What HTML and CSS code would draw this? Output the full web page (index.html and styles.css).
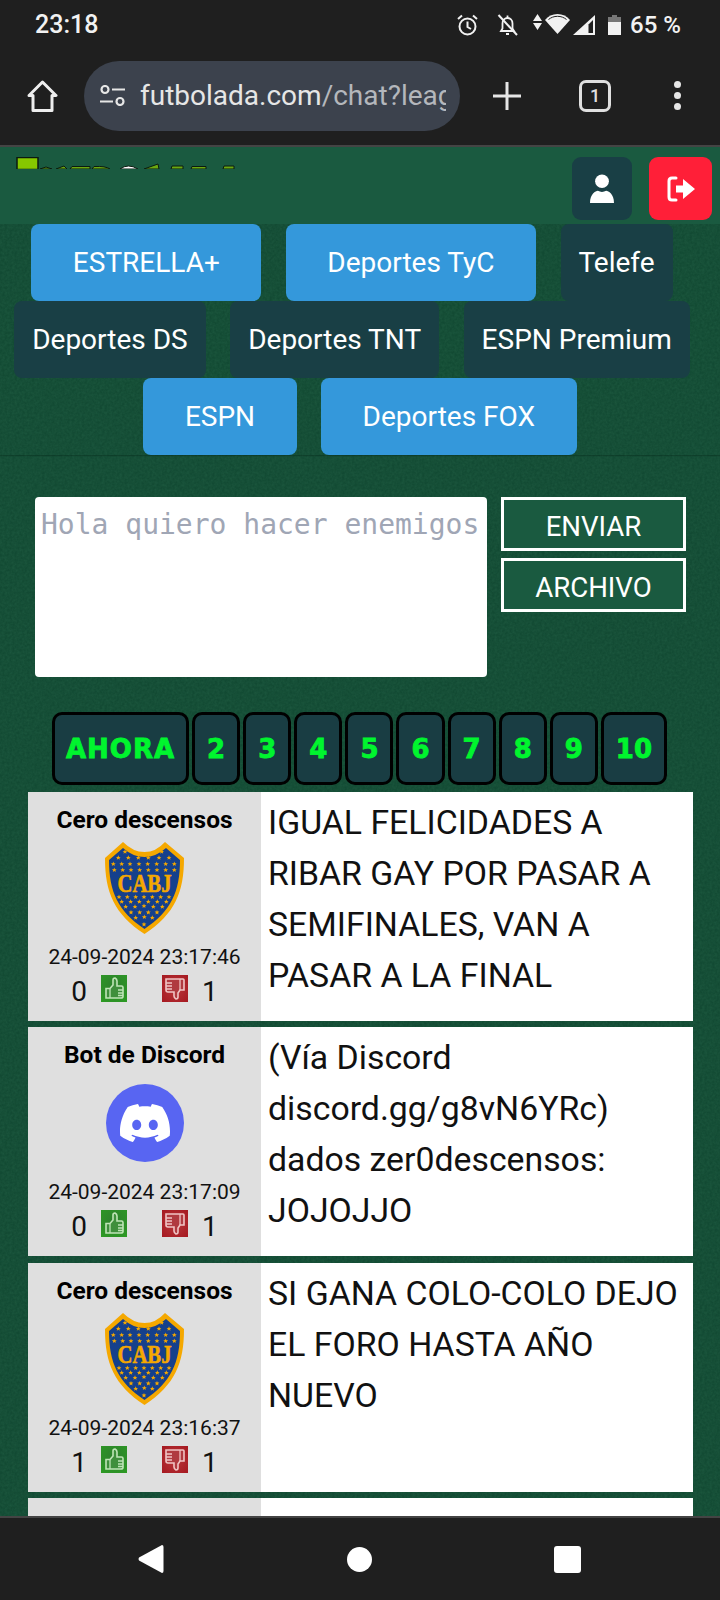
FILE: index.html
```html
<!DOCTYPE html>
<html lang="es">
<head>
  <meta charset="UTF-8" />
  <meta name="viewport" content="width=device-width, initial-scale=1.0"/>
  <title>Futbolada chat</title>
  <link rel="stylesheet" href="styles.css">
</head>
<body>

  <svg class="defs" width="0" height="0">
    <defs>
      <polygon id="star" points="0,-2.4 .7,-.7 2.4,-.7 1.1,.4 1.5,2.1 0,1.1 -1.5,2.1 -1.1,.4 -2.4,-.7 -.7,-.7" fill="#f5a800"/>

      <symbol id="boca" viewBox="0 0 79 92">
        <path d="M0 16 L18 0 Q28 10 39.5 10 Q51 10 60 0 L79 16 C79 50 70 72 39.5 92 C9 72 0 50 0 16Z" fill="#f5a800"/>
        <path d="M4 18 L18 6 Q28 15 39.5 15 Q51 15 61 6 L75 18 C75 50 66 69 39.5 87 C13 69 4 50 4 18Z" fill="#15408c"/>
        <use href="#star" x="20" y="9.7"/><use href="#star" x="56.7" y="9.7"/>
        <use href="#star" x="13.3" y="15.7"/><use href="#star" x="23.3" y="15.7"/><use href="#star" x="33.3" y="15.7"/><use href="#star" x="43.3" y="15.7"/><use href="#star" x="54" y="15.7"/><use href="#star" x="64" y="15.7"/>
        <use href="#star" x="8.3" y="22"/><use href="#star" x="16.7" y="22"/><use href="#star" x="25" y="22"/><use href="#star" x="34" y="22"/><use href="#star" x="42.7" y="22"/><use href="#star" x="51.7" y="22"/><use href="#star" x="60.7" y="22"/><use href="#star" x="69.3" y="22"/>
        <use href="#star" x="9.3" y="28"/><use href="#star" x="17.7" y="28"/><use href="#star" x="26" y="28"/><use href="#star" x="34.7" y="28"/><use href="#star" x="43.3" y="28"/><use href="#star" x="52" y="28"/><use href="#star" x="60.7" y="28"/><use href="#star" x="69.3" y="28"/>
        <text x="39.5" y="50" text-anchor="middle" textLength="54" lengthAdjust="spacingAndGlyphs" font-family="Liberation Serif" font-weight="700" font-size="26" stroke="#f5a800" stroke-width=".6" fill="#f5a800">CABJ</text>
        <use href="#star" x="14" y="55"/><use href="#star" x="22.3" y="55"/><use href="#star" x="30.7" y="55"/><use href="#star" x="39" y="55"/><use href="#star" x="47.3" y="55"/><use href="#star" x="55.7" y="55"/><use href="#star" x="64" y="55"/>
        <use href="#star" x="16.7" y="59.7"/><use href="#star" x="25.7" y="59.7"/><use href="#star" x="34.3" y="59.7"/><use href="#star" x="43.3" y="59.7"/><use href="#star" x="52.3" y="59.7"/><use href="#star" x="61.3" y="59.7"/>
        <use href="#star" x="20.7" y="64.7"/><use href="#star" x="30" y="64.7"/><use href="#star" x="39" y="64"/><use href="#star" x="48.3" y="64.7"/><use href="#star" x="57.3" y="64.7"/>
        <use href="#star" x="26" y="70.3"/><use href="#star" x="34.7" y="70.3"/><use href="#star" x="43.3" y="70.3"/><use href="#star" x="52" y="70.3"/>
        <use href="#star" x="30.7" y="75.7"/><use href="#star" x="39.3" y="75"/><use href="#star" x="47.3" y="75.7"/>
        <use href="#star" x="39" y="82.3"/>
      </symbol>

      <radialGradient id="thumbGreen" cx=".5" cy=".4" r=".8">
        <stop offset="0" stop-color="#2f7f2f"/>
        <stop offset="1" stop-color="#2c9c22"/>
      </radialGradient>
      <radialGradient id="thumbRed" cx=".5" cy=".5" r=".8">
        <stop offset="0" stop-color="#b8383c"/>
        <stop offset="1" stop-color="#a3141c"/>
      </radialGradient>

      <symbol id="thumbUp" viewBox="0 0 26 27">
        <rect width="26" height="27" fill="url(#thumbGreen)"/>
        <path d="M5 13.5 H9 L12 10 V5 Q12 3 14 3 Q16 4 16 6 V11 H20.5 Q22 11 22 12.5 V21.5 Q22 23 20 23 H5Z" fill="#3f8f3c" stroke="#bfe4b6" stroke-width="1.6"/>
        <path d="M17 15H22M17 18H22M17 20.5H22M9 14V23" stroke="#bfe4b6" stroke-width="1.3" fill="none"/>
      </symbol>
      <symbol id="thumbDown" viewBox="0 0 26 27">
        <rect width="26" height="27" fill="url(#thumbRed)"/>
        <path d="M4 4 H21 Q22 4 22 5 V15 H18 L16 18 V22 Q16 24 14 24 Q12 23 12 21 V17 H6 Q4 17 4 15Z" fill="#b03a40" stroke="#f0c4c4" stroke-width="1.6"/>
        <path d="M4 8H10M4 11H10M4 14H10M18 4V15" stroke="#f0c4c4" stroke-width="1.3" fill="none"/>
      </symbol>
    </defs>
  </svg>

  <div class="screen">

    <div class="status-bar">
      <span class="status-time">23:18</span>
      <div class="status-icons">
        <svg class="ico-alarm" width="21" height="22" viewBox="0 0 21 22" fill="none" stroke="#f2f2f2" stroke-width="2">
          <circle cx="10.5" cy="12.5" r="8"/>
          <path d="M10.5 7.5V13L14 15M1 5L5 1.5M20 5L16 1.5"/>
        </svg>
        <svg class="ico-bell" width="21" height="22" viewBox="0 0 21 22" fill="none" stroke="#f2f2f2" stroke-width="1.8">
          <path d="M4 17H17L15.5 14.5V9.5C15.5 6 13 4 10.5 4C8 4 5.5 6 5.5 9.5V14.5Z"/>
          <path d="M9 20H12M10.5 1.5V4" />
          <path d="M1.5 1L20 21" stroke-width="2"/>
        </svg>
        <svg class="ico-arrows" width="9" height="16" viewBox="0 0 9 16" fill="#f2f2f2">
          <path d="M4.5 0L9 7H0ZM0 9H9L4.5 16Z"/>
        </svg>
        <svg class="ico-wifi" width="25" height="21" viewBox="0 0 25 21" fill="#f2f2f2">
          <path d="M12.5 21L0 7C3 3 7.500 1 12.500 1S22 3 25 7Z"/>
          <path d="M3.500 6.500C6 4.500 9 3.300 12.500 3.300S19 4.500 21.500 6.500" stroke="#1f1f1f" stroke-width="1" fill="none"/>
        </svg>
        <svg class="ico-signal" width="22" height="20" viewBox="0 0 22 20">
          <path d="M22 0V20H0Z" fill="#f2f2f2"/>
          <path d="M20 5V18H15.500V9.500Z" fill="#1f1f1f"/>
        </svg>
        <svg class="ico-battery" width="13" height="20" viewBox="0 0 13 20">
          <path d="M4 0H9V2H13V7H0V2H4Z" fill="#777"/>
          <rect y="7" width="13" height="13" fill="#f2f2f2"/>
        </svg>
        <span class="status-battery">65 %</span>
      </div>
    </div>

    <div class="toolbar">
      <svg class="ico-home" width="31" height="32" viewBox="0 0 31 32" fill="none" stroke="#eee" stroke-width="3" stroke-linejoin="round">
        <path d="M2 15.500L15.500 2L29 15.500H25V30.500H6V15.500Z"/>
      </svg>
      <div class="url-pill">
        <svg class="ico-tune" width="25" height="21" viewBox="0 0 25 21" fill="none" stroke="#e6e6e6" stroke-width="2.200">
          <circle cx="5" cy="4.500" r="3.500"/>
          <path d="M12 4.500H25M0 16.500H13"/>
          <circle cx="20" cy="16.500" r="3.500"/>
        </svg>
        <div class="url-text"><span class="url-host">futbolada.com</span>/chat?leag</div>
      </div>
      <svg class="ico-plus" width="28" height="28" viewBox="0 0 28 28" stroke="#e6e6e6" stroke-width="3">
        <path d="M14 0V28M0 14H28"/>
      </svg>
      <div class="tab-count">1</div>
      <div class="menu-dots"><i></i><i></i><i></i></div>
    </div>

    <div class="page">
      <header class="site-header">
        <svg class="site-logo" width="222" height="12" viewBox="0 0 222 12">
          <rect x="1" y="0.500" width="21" height="12" fill="#86c800" stroke="#0b1a10" stroke-width="1.500"/>
          <path d="M24 12L30 10L36 12ZM40 12L48 9L51 12ZM54 12L56 9.500H74V12ZM76 12L78 9.500Q90 9 94 12Z" fill="#6aa810" stroke="#0b1a10"/>
          <path d="M104 12Q112 6 122 12Z" fill="#fff" stroke="#0b1a10"/>
          <path d="M128 12L142 7L143 12ZM155 12L156 9H167V12ZM175 12L176 9.500H190V12ZM207 12L208 9H218V12Z" fill="#6aa810" stroke="#0b1a10"/>
        </svg>
        <div class="header-btns">
          <button class="head-btn head-btn-user" type="button">
            <svg width="24" height="29" viewBox="0 0 26 32" preserveAspectRatio="none" fill="#fff">
              <circle cx="13" cy="8" r="7.500"/>
              <path d="M0 32C0 22 6 18.500 8.500 18.500Q13 21 17.500 18.500C20 18.500 26 22 26 32Z"/>
            </svg>
          </button>
          <button class="head-btn head-btn-exit" type="button">
            <svg width="28" height="26" viewBox="0 0 28 26">
              <path d="M9 2H5Q2 2 2 5V21Q2 24 5 24H9" fill="none" stroke="#fff" stroke-width="3" stroke-linecap="round"/>
              <path d="M9 9.500H16V3L28 13L16 23V16.500H9Z" fill="#fff"/>
            </svg>
          </button>
        </div>
      </header>

      <nav class="channels">
        <div class="channel-row channel-row-shift">
          <a class="channel channel-on">ESTRELLA+</a>
          <a class="channel channel-on">Deportes TyC</a>
          <a class="channel">Telefe</a>
        </div>
        <div class="channel-row channel-row-shift">
          <a class="channel">Deportes DS</a>
          <a class="channel">Deportes TNT</a>
          <a class="channel">ESPN Premium</a>
        </div>
        <div class="channel-row">
          <a class="channel channel-on">ESPN</a>
          <a class="channel channel-on">Deportes FOX</a>
        </div>
      </nav>

      <form class="compose">
        <textarea class="compose-input" placeholder="Hola quiero hacer enemigos"></textarea>
        <div class="compose-btns">
          <button class="compose-btn" type="button">ENVIAR</button>
          <button class="compose-btn" type="button">ARCHIVO</button>
        </div>
      </form>

      <div class="pager">
        <a class="pager-item pager-now">AHORA</a>
        <a class="pager-item">2</a>
        <a class="pager-item">3</a>
        <a class="pager-item">4</a>
        <a class="pager-item">5</a>
        <a class="pager-item">6</a>
        <a class="pager-item">7</a>
        <a class="pager-item">8</a>
        <a class="pager-item">9</a>
        <a class="pager-item">10</a>
      </div>

      <div class="messages">
        <article class="msg">
          <div class="msg-side">
            <div class="msg-user">Cero descensos</div>
            <div class="msg-avatar"><svg width="79" height="92"><use href="#boca"/></svg></div>
            <div class="msg-date">24-09-2024 23:17:46</div>
            <div class="msg-votes">
              <span>0</span>
              <svg class="thumb" width="26" height="27"><use href="#thumbUp"/></svg>
              <svg class="thumb thumb-down" width="26" height="27"><use href="#thumbDown"/></svg>
              <span>1</span>
            </div>
          </div>
          <div class="msg-text">IGUAL FELICIDADES A RIBAR GAY POR PASAR A SEMIFINALES, VAN A PASAR A LA FINAL</div>
        </article>

        <article class="msg">
          <div class="msg-side">
            <div class="msg-user">Bot de Discord</div>
            <div class="msg-avatar">
              <div class="discord-badge">
                <svg width="50" height="50" viewBox="0 0 24 24" fill="#fff">
                  <path d="M20.317 4.3698a19.7913 19.7913 0 00-4.8851-1.5152.0741.0741 0 00-.0785.0371c-.211.3753-.4447.8648-.6083 1.2495-1.8447-.2762-3.68-.2762-5.4868 0-.1636-.3933-.4058-.8742-.6177-1.2495a.077.077 0 00-.0785-.037 19.7363 19.7363 0 00-4.8852 1.515.0699.0699 0 00-.0321.0277C.5334 9.0458-.319 13.5799.0992 18.0578a.0824.0824 0 00.0312.0561c2.0528 1.5076 4.0413 2.4228 5.9929 3.0294a.0777.0777 0 00.0842-.0276c.4616-.6304.8731-1.2952 1.226-1.9942a.076.076 0 00-.0416-.1057c-.6528-.2476-1.2743-.5495-1.8722-.8923a.077.077 0 01-.0076-.1277c.1258-.0943.2517-.1923.3718-.2914a.0743.0743 0 01.0776-.0105c3.9278 1.7933 8.18 1.7933 12.0614 0a.0739.0739 0 01.0785.0095c.1202.099.246.1981.3728.2924a.077.077 0 01-.0066.1276 12.2986 12.2986 0 01-1.873.8914.0766.0766 0 00-.0407.1067c.3604.698.7719 1.3628 1.225 1.9932a.076.076 0 00.0842.0286c1.961-.6067 3.9495-1.5219 6.0023-3.0294a.077.077 0 00.0313-.0552c.5004-5.177-.8382-9.6739-3.5485-13.6604a.061.061 0 00-.0312-.0286zM8.02 15.3312c-1.1825 0-2.1569-1.0857-2.1569-2.419 0-1.3332.9555-2.4189 2.157-2.4189 1.2108 0 2.1757 1.0952 2.1568 2.419 0 1.3332-.9555 2.4189-2.1569 2.4189zm7.9748 0c-1.1825 0-2.1569-1.0857-2.1569-2.419 0-1.3332.9554-2.4189 2.1569-2.4189 1.2108 0 2.1757 1.0952 2.1568 2.419 0 1.3332-.946 2.4189-2.1568 2.4189Z"/>
                </svg>
              </div>
            </div>
            <div class="msg-date">24-09-2024 23:17:09</div>
            <div class="msg-votes">
              <span>0</span>
              <svg class="thumb" width="26" height="27"><use href="#thumbUp"/></svg>
              <svg class="thumb thumb-down" width="26" height="27"><use href="#thumbDown"/></svg>
              <span>1</span>
            </div>
          </div>
          <div class="msg-text">(Vía Discord discord.gg/g8vN6YRc) dados zer0descensos: JOJOJJO</div>
        </article>

        <article class="msg">
          <div class="msg-side">
            <div class="msg-user">Cero descensos</div>
            <div class="msg-avatar"><svg width="79" height="92"><use href="#boca"/></svg></div>
            <div class="msg-date">24-09-2024 23:16:37</div>
            <div class="msg-votes">
              <span>1</span>
              <svg class="thumb" width="26" height="27"><use href="#thumbUp"/></svg>
              <svg class="thumb thumb-down" width="26" height="27"><use href="#thumbDown"/></svg>
              <span>1</span>
            </div>
          </div>
          <div class="msg-text">SI GANA COLO-COLO DEJO EL FORO HASTA AÑO NUEVO</div>
        </article>

        <article class="msg">
          <div class="msg-side"></div>
          <div class="msg-text"></div>
        </article>
      </div>
    </div>

    <div class="nav-bar">
      <svg width="26" height="28" viewBox="0 0 26 28" fill="#fff"><path d="M24 0Q25.500 0 25.500 2V26Q25.500 28 24 28L1 15.500Q0 14 1 12.500Z"/></svg>
      <div class="nav-home"></div>
      <div class="nav-recent"></div>
    </div>

  </div>
</body>
</html>
```

FILE: styles.css
```css
* {
  box-sizing: border-box;
}

body {
  margin: 0;
  font-family: Roboto, "Liberation Sans", sans-serif;
  background: #1f1f1f;
}

.defs {
  position: absolute;
}

.screen {
  width: 720px;
  height: 1600px;
  display: flex;
  flex-direction: column;
  overflow: hidden;
}

/* status bar */
.status-bar {
  height: 48px;
  flex: none;
  background: #1f1f1f;
  color: #f2f2f2;
  display: flex;
  align-items: center;
  justify-content: space-between;
  padding: 1px 39px 0 35px;
  font-weight: 500;
  font-size: 24px;
}

.status-time {
  font-size: 25px;
}

.status-icons {
  display: flex;
  align-items: center;
}

.ico-bell {
  margin-left: 19px;
}

.ico-arrows {
  margin: 0 3px 6px 15px;
}

.ico-wifi {
  margin-bottom: 2px;
}

.ico-signal {
  margin-left: 3px;
}

.ico-battery {
  margin-left: 13px;
}

.status-battery {
  margin-left: 9px;
}

/* browser toolbar */
.toolbar {
  height: 97px;
  flex: none;
  background: #1f1f1f;
  display: flex;
  align-items: center;
  padding: 0 0 2px 27px;
}

.url-pill {
  width: 376px;
  height: 70px;
  margin-left: 26px;
  border-radius: 35px;
  background: #3c424d;
  display: flex;
  align-items: center;
  padding: 0 14px 0 16px;
  overflow: hidden;
}

.url-text {
  margin-left: 15px;
  flex: 1;
  overflow: hidden;
  white-space: nowrap;
  font-size: 28px;
  color: #b4b7bc;
}

.url-host {
  color: #e6e6e6;
}

.ico-plus {
  margin-left: 33px;
}

.tab-count {
  width: 32px;
  height: 32px;
  margin-left: 58px;
  border: 3px solid #e0e0e0;
  border-radius: 7px;
  color: #e0e0e0;
  font-size: 18px;
  font-weight: 500;
  display: flex;
  align-items: center;
  justify-content: center;
}

.menu-dots {
  margin-left: 63px;
  display: flex;
  flex-direction: column;
  gap: 4px;
}

.menu-dots i {
  width: 7px;
  height: 7px;
  border-radius: 50%;
  background: #e6e6e6;
}

/* page */
.page {
  flex: 1;
  min-height: 0;
  overflow: hidden;
  border-top: 2px solid #444;
  background-color: #124a33;
  background-image: url("data:image/svg+xml,%3Csvg xmlns='http://www.w3.org/2000/svg' width='300' height='300'%3E%3Cfilter id='n'%3E%3CfeTurbulence type='fractalNoise' baseFrequency='.4' numOctaves='2' stitchTiles='stitch'/%3E%3CfeColorMatrix values='0 0 0 0 .05 0 0 0 0 .24 0 0 0 0 .13 0 0 0 .3 -.07'/%3E%3C/filter%3E%3Crect width='300' height='300' filter='url(%23n)'/%3E%3C/svg%3E");
}

.site-header {
  height: 77px;
  background: #1a5a40;
  display: flex;
  justify-content: space-between;
  padding: 10px 8px 0 16px;
}

.site-logo {
  display: block;
}

.header-btns {
  display: flex;
  gap: 17px;
  align-items: flex-start;
}

.head-btn {
  height: 63px;
  border: none;
  border-radius: 9px;
  padding: 0;
  display: flex;
  align-items: center;
  justify-content: center;
}

.head-btn-user {
  width: 60px;
  background: #193f45;
}

.head-btn-exit {
  width: 63px;
  background: #ff1f38;
}

.channels {
  height: 231px;
  box-shadow: 0 1px 1px rgba(0, 30, 15, 0.3);
}

.channel-row {
  height: 77px;
  display: flex;
  justify-content: center;
  gap: 24.5px;
}

.channel-row-shift {
  padding-right: 16px;
}

.channel {
  display: flex;
  align-items: center;
  padding: 0 18px 1px;
  border-radius: 8px;
  background: #193f45;
  color: #fff;
  font-size: 28px;
}

.channel-on {
  padding: 0 41.500px 1px;
  background: #3498db;
}

/* compose form */
.compose {
  display: flex;
  gap: 14px;
  margin: 42px 34px 0 35px;
  height: 180px;
}

.compose-input {
  width: 452px;
  height: 180px;
  border: none;
  border-radius: 4px;
  padding: 11px 6px;
  background: #fff;
  resize: none;
  font-family: "DejaVu Sans Mono", monospace;
  font-size: 28px;
}

.compose-input::placeholder {
  color: #a0a6b5;
  opacity: 1;
}

.compose-btns {
  width: 185px;
  display: flex;
  flex-direction: column;
  gap: 7px;
}

.compose-btn {
  height: 54px;
  border: 3px solid #fff;
  background: #1a5a40;
  color: #fff;
  font-family: Roboto, sans-serif;
  font-size: 27.600px;
  padding: 5px 0 0;
}

/* pager */
.pager {
  display: flex;
  justify-content: center;
  gap: 3px;
  margin: 35px 0 0 -1px;
  height: 73px;
}

.pager-item {
  display: flex;
  align-items: center;
  padding: 0 12px;
  border: 3px solid #000;
  border-radius: 10px;
  background: #193d43;
  color: #00f52e;
  font-family: "DejaVu Sans", sans-serif;
  font-weight: 700;
  font-size: 26px;
  -webkit-text-stroke: 0.8px #00f52e;
}

.pager-now {
  padding: 0 11px;
  letter-spacing: 1px;
}

/* chat messages */
.messages {
  margin: 7px 27px 0 28px;
  display: flex;
  flex-direction: column;
  gap: 6.33px;
}

.msg {
  height: 229px;
  flex: none;
  display: flex;
  background: #fff;
}

.msg-side {
  width: 233px;
  flex: none;
  background: #dfdfdf;
  display: flex;
  flex-direction: column;
  align-items: center;
  color: #111;
}

.msg-user {
  margin-top: 14px;
  height: 28px;
  line-height: 28px;
  font-size: 24.500px;
  font-weight: 700;
  color: #000;
}

.msg-avatar {
  height: 108px;
  display: flex;
  align-items: center;
  justify-content: center;
}

.msg-date {
  margin-top: 2px;
  height: 26px;
  line-height: 26px;
  font-size: 21px;
}

.msg-votes {
  margin-top: 5px;
  display: flex;
  align-items: flex-start;
  gap: 14px;
  font-size: 28px;
  line-height: 34px;
}

.thumb {
  display: block;
}

.thumb-down {
  margin-left: 21px;
}

.discord-badge {
  width: 78px;
  height: 78px;
  border-radius: 50%;
  background: #5865f2;
  display: flex;
  align-items: center;
  justify-content: center;
}

.msg-text {
  flex: 1;
  padding: 5px 7px;
  font-size: 33.800px;
  line-height: 51px;
  color: #111;
}

/* android nav */
.nav-bar {
  height: 84px;
  flex: none;
  background: #1f1f1f;
  border-top: 2px solid #444;
  display: flex;
  align-items: center;
  padding: 0 139px 0 138px;
  justify-content: space-between;
}

.nav-home {
  width: 25px;
  height: 25px;
  border-radius: 50%;
  background: #fff;
}

.nav-recent {
  width: 27px;
  height: 27px;
  border-radius: 3px;
  background: #fff;
}
```
